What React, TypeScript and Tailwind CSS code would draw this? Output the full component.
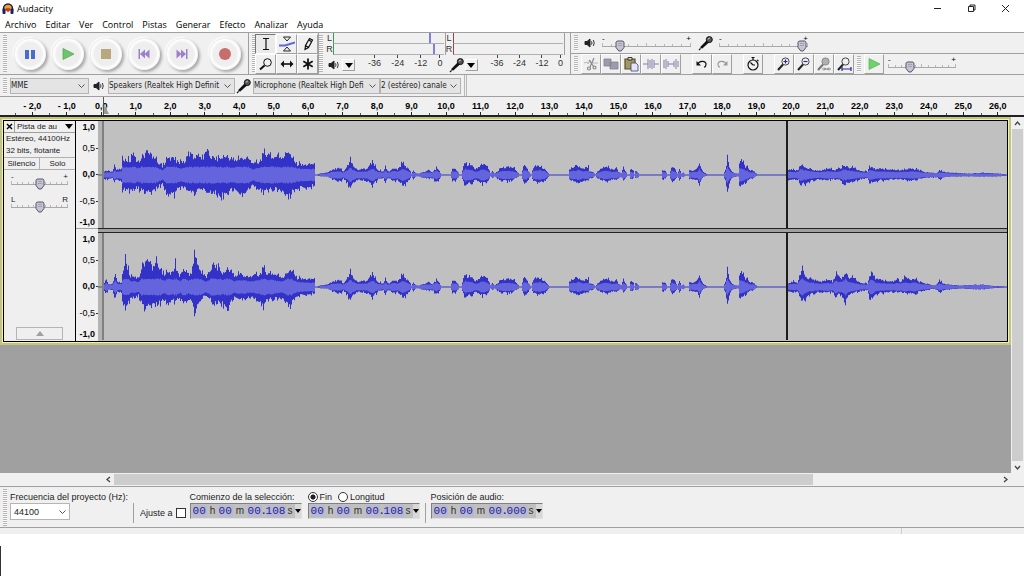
import { useState } from 'react';
import type { ReactNode } from 'react';

// [x, peak above zero, peak below zero], interpolated and roughened per column
type Peak = [number, number, number];

const VOICE: Peak[] = [
  [316, 0, 0], [320, 1, 1], [327, 2, 1], [330, 4, 3], [335, 6, 5], [340, 6, 6], [343, 3, 3], [347, 9, 8], [350, 15, 13],
  [353, 9, 8], [357, 5, 5], [362, 6, 5], [367, 6, 6], [370, 11, 9], [373, 12, 10], [375, 8, 7], [378, 4, 4], [383, 4, 3],
  [385, 9, 7], [387, 4, 3], [389, 3, 3], [392, 7, 6], [395, 7, 6], [397, 5, 5], [402, 12, 10], [406, 8, 8], [409, 5, 5],
  [411, 1, 1], [413, 4, 4], [416, 1, 1], [419, 1, 1], [421, 2, 2], [427, 4, 3], [432, 3, 3], [436, 7, 7], [439, 4, 4],
  [441, 0, 0], [450, 0, 0], [452, 6, 5], [455, 6, 5], [458, 2, 2], [459, 0, 0], [461, 0, 0], [463, 9, 7], [465, 13, 11],
  [468, 10, 9], [472, 9, 7], [475, 5, 5], [478, 7, 6], [482, 12, 9], [487, 8, 6], [489, 4, 3], [490, 1, 1], [492, 4, 3],
  [494, 1, 1], [497, 3, 3], [500, 7, 5], [508, 8, 6], [513, 7, 4], [517, 3, 2], [519, 0, 0], [521, 0, 0], [523, 9, 7],
  [525, 10, 7], [527, 6, 6], [529, 2, 2], [531, 0, 0], [532, 4, 4], [533, 8, 6], [538, 10, 7], [543, 7, 7], [547, 3, 3],
  [549, 0, 0], [568, 0, 0], [569, 6, 5], [573, 8, 6], [578, 9, 8], [583, 6, 6], [588, 8, 6], [589, 3, 3], [592, 3, 3],
  [595, 0, 0], [597, 3, 3], [600, 6, 4], [606, 9, 6], [610, 6, 5], [613, 5, 4], [616, 8, 5], [618, 3, 3], [621, 2, 2],
  [623, 8, 5], [625, 4, 3], [627, 0, 0], [629, 0, 0], [630, 5, 4], [633, 4, 3], [634, 0, 0], [635, 4, 3], [638, 2, 2],
  [639, 0, 0], [661, 0, 0], [662, 5, 4], [665, 4, 3], [667, 0, 0], [669, 0, 0], [670, 4, 3], [672, 9, 7], [675, 5, 4],
  [677, 1, 1], [679, 6, 5], [681, 1, 1], [683, 2, 2], [685, 0, 0], [688, 0, 0], [689, 5, 4], [692, 4, 4], [695, 5, 4],
  [697, 6, 5], [699, 13, 10], [700, 8, 7], [702, 4, 3], [704, 2, 1], [707, 0, 0], [723, 0, 0], [725, 5, 5], [727, 17, 17],
  [729, 8, 8], [731, 4, 3], [733, 2, 2], [736, 1, 1], [738, 1, 1], [739, 14, 12], [742, 13, 10], [745, 8, 8], [747, 10, 6],
  [749, 4, 3], [752, 5, 4], [755, 2, 1], [757, 0, 0], [787, 0, 0],
];

const LEFT: Peak[] = [
  [103, 3, 3], [106, 4, 4], [112, 3, 3], [114, 11, 6], [116, 5, 5], [121, 6, 6], [122, 18, 14], [125, 16, 15], [130, 14, 15],
  [133, 22, 16], [137, 13, 12], [142, 17, 16], [146, 24, 18], [152, 20, 19], [157, 13, 13], [162, 9, 9], [165, 13, 15],
  [168, 18, 20], [173, 17, 19], [178, 12, 14], [182, 12, 12], [185, 16, 14], [191, 25, 18], [194, 16, 20], [198, 20, 15],
  [203, 17, 15], [206, 27, 18], [210, 19, 19], [216, 17, 19], [219, 15, 22], [223, 20, 19], [230, 15, 14], [237, 16, 17],
  [243, 18, 22], [248, 17, 15], [253, 11, 10], [258, 13, 14], [263, 20, 18], [267, 23, 16], [272, 18, 14], [277, 20, 14],
  [283, 19, 17], [288, 26, 24], [292, 16, 17], [297, 11, 14], [303, 10, 13], [310, 11, 12], [314, 12, 10], [315, 0, 0],
  ...VOICE,
  [788, 6, 5], [792, 5, 4], [795, 4, 4], [798, 6, 5], [800, 11, 11], [803, 9, 9], [808, 6, 7], [813, 5, 5], [820, 4, 4],
  [827, 7, 5], [833, 5, 4], [840, 6, 5], [843, 10, 10], [847, 8, 8], [853, 7, 6], [860, 4, 4], [867, 3, 3], [869, 9, 8],
  [875, 6, 6], [880, 6, 5], [885, 6, 5], [893, 5, 4], [900, 5, 4], [912, 6, 6], [918, 5, 4], [923, 3, 3], [930, 2, 2],
  [937, 2, 2], [939, 4, 4], [943, 3, 2], [950, 2, 1], [970, 1, 1], [983, 2, 1], [1000, 1, 1], [1007, 0, 0],
];

const RIGHT: Peak[] = [
  [103, 2, 2], [106, 8, 6], [108, 2, 2], [112, 3, 3], [115, 14, 12], [117, 5, 5], [121, 4, 5], [123, 20, 18], [125, 33, 22],
  [127, 20, 18], [130, 10, 11], [135, 10, 11], [138, 9, 8], [142, 20, 18], [144, 25, 22], [149, 27, 20], [152, 20, 20],
  [157, 25, 18], [160, 17, 16], [164, 13, 12], [168, 15, 17], [173, 15, 13], [175, 24, 14], [177, 14, 13], [180, 10, 12],
  [184, 20, 17], [188, 12, 13], [191, 15, 14], [194, 35, 28], [197, 22, 20], [200, 17, 15], [203, 13, 10], [206, 10, 9],
  [210, 18, 13], [213, 24, 20], [217, 20, 15], [222, 14, 16], [227, 17, 20], [230, 16, 15], [234, 11, 11], [240, 14, 12],
  [245, 11, 14], [248, 10, 11], [255, 12, 11], [258, 12, 14], [263, 18, 21], [267, 14, 13], [272, 14, 12], [277, 12, 11],
  [283, 10, 12], [289, 18, 21], [293, 14, 13], [297, 9, 9], [303, 8, 8], [310, 8, 7], [314, 9, 6], [315, 0, 0],
  ...VOICE,
  [788, 4, 4], [793, 5, 5], [797, 4, 4], [799, 12, 9], [802, 20, 16], [805, 11, 11], [808, 8, 8], [813, 8, 6], [820, 5, 5],
  [827, 8, 5], [832, 5, 5], [836, 15, 11], [838, 9, 7], [842, 9, 10], [845, 15, 17], [848, 10, 8], [853, 9, 5], [860, 4, 4],
  [867, 3, 3], [869, 10, 12], [871, 16, 12], [875, 9, 7], [880, 7, 6], [887, 6, 5], [893, 5, 5], [897, 9, 5], [900, 5, 5],
  [905, 11, 6], [910, 6, 6], [914, 9, 8], [918, 5, 5], [927, 3, 3], [933, 1, 1], [937, 3, 3], [939, 6, 5], [943, 3, 3],
  [950, 2, 2], [960, 1, 1], [973, 2, 2], [983, 2, 2], [990, 1, 1], [1007, 0, 0],
];

const noise = (n: number) => {
  const v = Math.sin(n * 12.9898) * 43758.5453;
  return v - Math.floor(v);
};

function peakAt(peaks: Peak[], x: number): [number, number] {
  const i = peaks.findIndex((p) => p[0] > x);
  if (i < 1) return [0, 0];
  const [x0, u0, d0] = peaks[i - 1];
  const [x1, u1, d1] = peaks[i];
  const t = (x - x0) / (x1 - x0);
  return [u0 + (u1 - u0) * t, d0 + (d1 - d0) * t];
}

const rough = (n: number) => 0.78 + 0.28 * noise(n) + (noise(n + 333) > 0.86 ? 0.22 : 0);

function wavePaths(peaks: Peak[], zero: number) {
  let top = '';
  let bottom = '';
  let rmsTop = '';
  let rmsBottom = '';
  for (let x = 103; x < 1007; x++) {
    const [u, d] = peakAt(peaks, x);
    const up = u * rough(x);
    const down = d * rough(x + 5000);
    const rms = Math.min((u + d) * 0.22 + 1, 8, (u + d) / 2) * (0.92 + 0.16 * noise(x + 900));
    top += `L${x} ${(zero - up - 0.4).toFixed(1)}H${x + 1}`;
    bottom = `L${x + 1} ${(zero + down + 0.4).toFixed(1)}H${x}` + bottom;
    rmsTop += `L${x} ${(zero - rms).toFixed(1)}H${x + 1}`;
    rmsBottom = `L${x + 1} ${(zero + rms).toFixed(1)}H${x}` + rmsBottom;
  }
  return { peak: `M103 ${zero}${top}${bottom}Z`, rms: `M103 ${zero}${rmsTop}${rmsBottom}Z` };
}

function Waveform({ peaks }: { peaks: Peak[] }) {
  const { peak, rms } = wavePaths(peaks, 54);
  return (
    <svg className="block h-[107px] w-full" viewBox="98 0 909 107" preserveAspectRatio="none" aria-hidden="true">
      <rect x="98" width="909" height="107" fill="#c0c0c0" />
      <rect x="98" width="4" height="107" fill="#b4b4b4" />
      <rect x="98" y="53.5" width="5" height="1" fill="#555" />
      <path d={peak} fill="#3232c8" />
      <path d={rms} fill="#6464dc" />
      <rect x="102" width="2" height="107" fill="#808080" />
      <rect x="786" width="2" height="107" fill="#1c1c1c" />
    </svg>
  );
}

const LEVELS = [
  { text: '1,0', className: 'font-bold' },
  { text: '0,5', className: 'mt-[9px]', tick: true },
  { text: '0,0', className: 'mt-[14px] font-bold', tick: true },
  { text: '-0,5', className: 'mt-[15px]', tick: true },
  { text: '-1,0', className: 'mt-[9px] font-bold' },
];

function Channel({ peaks, tall }: { peaks: Peak[]; tall?: boolean }) {
  return (
    <div className={`flex ${tall ? 'h-[108px]' : 'h-[107px]'}`}>
      <div className="flex w-[22px] shrink-0 flex-col bg-[#f0f0f0] text-[9px] leading-[12px]">
        {LEVELS.map((l) => (
          <div key={l.text} className={`flex items-center justify-end gap-px ${l.className}`}>
            {l.text}
            <i className={`h-px w-[2px] ${l.tick ? 'bg-[#333]' : ''}`} />
          </div>
        ))}
      </div>
      <div className="min-w-0 flex-1 bg-[#c0c0c0]">
        <Waveform peaks={peaks} />
      </div>
    </div>
  );
}

function Grip({ className = 'h-[37px]' }: { className?: string }) {
  return (
    <div
      className={`mx-[3px] w-1 shrink-0 self-center bg-[repeating-linear-gradient(180deg,#b4b4b4_0_1px,#fafafa_1px_2px)] ${className}`}
    />
  );
}

function RoundButton({ label, children }: { label: string; children: ReactNode }) {
  return (
    <button
      aria-label={label}
      className="flex size-8 items-center justify-center rounded-full bg-[radial-gradient(circle,#eeeeee_50%,#ffffff_64%,#e2e2e2_72%)] shadow-[2px_2px_3px_#a8a8a8,-1px_-1px_2px_#ffffff]"
    >
      <svg width="16" height="16" viewBox="0 0 16 16">
        {children}
      </svg>
    </button>
  );
}

interface ToolButtonProps {
  label: string;
  pressed?: boolean;
  width?: string;
  children: ReactNode;
}

function ToolButton({ label, pressed, width = 'w-[20px]', children }: ToolButtonProps) {
  return (
    <button
      aria-label={label}
      aria-pressed={pressed}
      className={`flex h-[20px] shrink-0 items-center justify-center border ${width} ${
        pressed
          ? 'border-t-[#777] border-r-white border-b-white border-l-[#777] bg-[#eaeaea]'
          : 'border-t-white border-r-[#a0a0a0] border-b-[#a0a0a0] border-l-white bg-[#f0f0f0]'
      }`}
    >
      <svg width="16" height="16" viewBox="0 0 16 16" fill="none" stroke="#111" strokeWidth="1.2">
        {children}
      </svg>
    </button>
  );
}

function SpeakerIcon() {
  return (
    <svg width="12" height="12" viewBox="0 0 12 12" fill="none" stroke="#222" className="shrink-0" aria-hidden="true">
      <path d="M1 4.5h2L6 2v8L3 7.5H1z" fill="#222" />
      <path d="M7.5 4.3q1 1.7 0 3.4M9.3 3q1.9 3 0 6" strokeWidth="0.9" />
    </svg>
  );
}

function MicIcon() {
  return (
    <svg width="16" height="16" viewBox="0 0 16 16" className="shrink-0" aria-hidden="true">
      <path d="M1 15l1.6-1.6" stroke="#111" strokeWidth="1.2" />
      <path d="M2 12.2L9 5l2.3 2.3L4 13.8z" fill="#111" />
      <circle cx="11.3" cy="4.6" r="3" fill="#555" stroke="#111" />
      <path d="M9.8 4.2l2-1.2" stroke="#ddd" />
    </svg>
  );
}

function DropArrow({ label }: { label: string }) {
  return (
    <button
      aria-label={label}
      className="flex h-3 w-[13px] shrink-0 items-center justify-center border border-t-white border-r-[#a0a0a0] border-b-[#a0a0a0] border-l-white"
    >
      <svg width="8" height="5" viewBox="0 0 8 5">
        <path d="M0 0h8L4 5z" fill="#000" />
      </svg>
    </button>
  );
}

interface SliderProps {
  label: string;
  value: number;
  className: string;
  ends?: [string, string];
  ticks?: number;
}

function Slider({ label, value, className, ends = ['-', '+'], ticks = 11 }: SliderProps) {
  const [pos, setPos] = useState(value);
  return (
    <div className={`relative h-[17px] shrink-0 ${className}`}>
      <div className="flex justify-between text-[8px] leading-[8px]">
        <span>{ends[0]}</span>
        <span>{ends[1]}</span>
      </div>
      <div className="flex h-[4px] items-end justify-between border-b border-[#a8a8a8]">
        {Array.from({ length: ticks }, (_, i) => (
          <i key={i} className={`w-px bg-[#b8b8b8] ${i % 5 ? 'h-[2px]' : 'h-[3px]'}`} />
        ))}
      </div>
      <input
        type="range"
        aria-label={label}
        value={pos}
        onChange={(e) => setPos(Number(e.target.value))}
        className="absolute inset-x-0 bottom-0 m-0 h-[11px] w-full appearance-none bg-transparent [&::-webkit-slider-thumb]:size-2 [&::-webkit-slider-thumb]:appearance-none"
      />
      <svg
        className="pointer-events-none absolute bottom-0 -ml-[5px]"
        style={{ left: `${pos}%` }}
        width="10"
        height="12"
        viewBox="0 0 10 12"
      >
        <path d="M2.2 1h5.6L9 2.2v5.3L6.2 11H3.8L1 7.5V2.2z" fill="#c4c4d4" stroke="#555560" />
        <path d="M3 3.5h4M3 5.5h4" stroke="#9898a8" strokeWidth="0.8" />
      </svg>
    </div>
  );
}

interface SelectProps {
  label: string;
  value: string;
  className: string;
  id?: string;
  pad?: string;
}

function Select({ label, value, className, id, pad = 'pl-0' }: SelectProps) {
  return (
    <div className={`relative shrink-0 ${className}`}>
      <select
        id={id}
        aria-label={label}
        className={`size-full appearance-none overflow-hidden border border-[#b4b4b4] bg-inherit whitespace-nowrap ${pad}`}
      >
        <option>{value}</option>
      </select>
      <svg className="pointer-events-none absolute top-1/2 right-1 -mt-[2px]" width="7" height="5" viewBox="0 0 7 5" fill="none">
        <path d="M0.5 0.5l3 3 3-3" stroke="#555" />
      </svg>
    </div>
  );
}

function MeterBars({ color, marks, label }: { color: string; marks: string[]; label: string }) {
  return (
    <div className="flex flex-1 flex-col border-r border-[#a0a0a0]" role="img" aria-label={label}>
      {['L', 'R'].map((side, i) => (
        <div key={side} className="flex h-[11px] items-stretch">
          <span className="w-[7px] text-center text-[9px] leading-[11px] text-[#333]">{side}</span>
          <div className={`relative flex-1 border-b border-l border-b-[#b0b0b0] ${color}`}>
            {marks[i] && <i className={`absolute inset-y-0 w-[2px] bg-[#8080dc] ${marks[i]}`} />}
          </div>
          <i className="w-px" />
        </div>
      ))}
    </div>
  );
}

function MeterScale() {
  return (
    <div className="flex flex-1 justify-between pr-[2px] pl-[11px]">
      {['-36', '-24', '-12', '0'].map((db) => (
        <div key={db} className="flex flex-col items-center text-[9px] leading-[10px] text-[#333]">
          <i className="h-[3px] w-px bg-[#444]" />
          {db}
        </div>
      ))}
    </div>
  );
}

function Field({ label, value }: { label: string; value: string }) {
  return (
    <input
      aria-label={label}
      defaultValue={value}
      className={`h-[12px] border-0 bg-[#b8b8d0] p-0 font-['Liberation_Mono',monospace] text-[11px] leading-[12px] text-[#2424a0] ${
        value.length === 3 ? 'w-[20px]' : 'w-[14px]'
      }`}
    />
  );
}

function TimeBox({ label, ms }: { label: string; ms: string }) {
  return (
    <div
      role="group"
      aria-label={label}
      className="flex h-[16px] w-[112px] items-center border border-t-[#808080] border-r-[#e0e0e0] border-b-[#e0e0e0] border-l-[#808080] bg-[#c0c0c0] pl-[2px] text-[10px] leading-[12px] text-[#333]"
    >
      <Field label="horas" value="00" />
      <span className="w-[12px] text-center">h</span>
      <Field label="minutos" value="00" />
      <span className="w-[15px] text-center">m</span>
      <Field label="segundos" value="00" />
      <span className="w-[4px] text-center font-bold text-[#2424a0]">.</span>
      <Field label="milisegundos" value={ms} />
      <span className="flex-1 text-center">s</span>
      <button aria-label="Formato" className="flex h-full w-[6px] items-center justify-center bg-[#d8d8d8]">
        <svg width="6" height="4" viewBox="0 0 6 4">
          <path d="M0 0h6L3 4z" fill="#000" />
        </svg>
      </button>
    </div>
  );
}

function Magnifier({ fill = 'none', children }: { fill?: string; children?: ReactNode }) {
  return (
    <>
      <path d="M7 8.5L2 14" stroke="#222" strokeWidth="2" />
      <circle cx="9.5" cy="5.5" r="3.6" stroke="#444" strokeWidth="1" fill={fill} />
      {children}
    </>
  );
}

const MENUS = ['Archivo', 'Editar', 'Ver', 'Control', 'Pistas', 'Generar', 'Efecto', 'Analizar', 'Ayuda'];

function TitleBar() {
  return (
    <header className="bg-white font-['Open_Sans','Noto_Sans',sans-serif] text-[9px]">
      <div className="flex h-[17px] items-center pl-[2px]">
        <svg width="12" height="12" viewBox="0 0 12 12" className="shrink-0">
          <path d="M1.5 8V5.5a4.5 4.5 0 0 1 9 0V8" fill="#e8a030" stroke="#1c2050" strokeWidth="1.5" />
          <rect x="0.5" y="5.5" width="3" height="5.5" rx="1" fill="#182068" />
          <rect x="8.5" y="5.5" width="3" height="5.5" rx="1" fill="#182068" />
          <path d="M4 8l1-3 1 4 1-4 1 3" stroke="#d03010" fill="none" />
        </svg>
        <h1 className="ml-[3px] flex-1">Audacity</h1>
        <div className="flex gap-[25px] pr-[14px]">
          <button aria-label="Minimizar">
            <svg width="9" height="9" viewBox="0 0 9 9" fill="none" stroke="#222">
              <path d="M1 4.5h7" />
            </svg>
          </button>
          <button aria-label="Restaurar">
            <svg width="9" height="9" viewBox="0 0 9 9" fill="none" stroke="#222">
              <path d="M1.5 2.5h5v5h-5zM3 2.5V1h5v5H6.5" />
            </svg>
          </button>
          <button aria-label="Cerrar">
            <svg width="9" height="9" viewBox="0 0 9 9" fill="none" stroke="#222">
              <path d="M1 1l7 7M8 1L1 8" />
            </svg>
          </button>
        </div>
      </div>
      <nav className="flex h-[15px] items-center gap-[9px] pl-[5px]">
        {MENUS.map((m) => (
          <button key={m}>{m}</button>
        ))}
      </nav>
    </header>
  );
}

function TransportBar() {
  return (
    <div className="flex shrink-0 items-center border-r border-[#a0a0a0]">
      <Grip />
      <div className="flex gap-[6px] pr-[7px] pl-1">
        <RoundButton label="Pausa">
          <path d="M3 4h4v9H3zM9 4h4v9H9z" fill="#4a6ad0" />
        </RoundButton>
        <RoundButton label="Reproducir">
          <path d="M3 2.500v11L14 8z" fill="#6cc46c" stroke="#58a858" strokeWidth="0.8" />
        </RoundButton>
        <RoundButton label="Detener">
          <path d="M3 3h10v10H3z" fill="#b8a880" />
        </RoundButton>
        <RoundButton label="Ir al inicio">
          <path d="M2.5 3H4v10H2.500zM4 8l5-4.500v9zM8.500 8l5-4.500v9z" fill="#9c80cc" />
        </RoundButton>
        <RoundButton label="Ir al final">
          <path d="M13.500 3H12v10h1.500zM12 8L7 3.500v9zM7.500 8l-5-4.500v9z" fill="#9c80cc" />
        </RoundButton>
        <div className="ml-[5px]">
          <RoundButton label="Grabar">
            <circle cx="8" cy="8" r="6" fill="#c86c6c" />
          </RoundButton>
        </div>
      </div>
    </div>
  );
}

function ToolsBar() {
  return (
    <div className="flex shrink-0 items-center border-r border-[#a0a0a0]">
      <Grip className="-mr-px h-[37px]" />
      <div className="grid grid-cols-3">
        <ToolButton label="Selección" width="w-[21px]" pressed>
          <path d="M5 2.500h6M8 2.500v11M5 13.500h6" />
        </ToolButton>
        <ToolButton label="Envolvente" width="w-[21px]">
          <path d="M4.500 1h7L8 5zM8 11l3.500 4h-7z" strokeWidth="0.9" />
          <path d="M0 9.500h6l10-3" stroke="#6464dc" strokeWidth="2" />
        </ToolButton>
        <ToolButton label="Dibujo" width="w-[21px]">
          <path d="M5 13.500l0.500-4 4-7 3 1.500-4 7.500zM5.500 9.500l3 2M9 4l3 2" />
        </ToolButton>
        <ToolButton label="Zoom" width="w-[21px]">
          <path d="M6.500 9.500L2 13.500" strokeWidth="2" />
          <circle cx="9.500" cy="6.500" r="3.800" strokeWidth="1" />
        </ToolButton>
        <ToolButton label="Desplazamiento en el tiempo" width="w-[21px]">
          <path d="M3 8h10" strokeWidth="1.600" />
          <path d="M5 4.500L1.500 8 5 11.500zM11 4.500L14.500 8 11 11.500z" fill="#111" stroke="none" />
        </ToolButton>
        <ToolButton label="Multiherramienta" width="w-[21px]">
          <path d="M8 2.500v11M3.300 5.300l9.400 5.400M12.700 5.300l-9.400 5.400" strokeWidth="1.800" />
        </ToolButton>
      </div>
    </div>
  );
}

function MeterBar() {
  return (
    <div className="flex w-[252px] shrink-0 border-r border-[#a0a0a0]">
      <Grip className="-ml-0 h-[37px]" />
      <div className="flex flex-1 flex-col">
        <div className="flex">
          <MeterBars label="Nivel de reproducción" color="border-l-[#409850]" marks={['left-[95px]', 'left-[99px]']} />
          <MeterBars label="Nivel de grabación" color="border-l-[#a04040]" marks={[]} />
          <i className="w-[5px]" />
        </div>
        <div className="flex pr-[5px]">
          <div className="flex flex-1 items-start gap-[2px] pl-[2px]">
            <div className="flex items-center gap-[2px] pt-[4px]">
              <SpeakerIcon />
              <DropArrow label="Opciones de reproducción" />
            </div>
            <MeterScale />
          </div>
          <div className="flex flex-1 items-start gap-[2px] pl-[4px]">
            <div className="flex items-center pt-[2px]">
              <MicIcon />
              <DropArrow label="Opciones de grabación" />
            </div>
            <MeterScale />
          </div>
        </div>
      </div>
    </div>
  );
}

function MixerAndEditBars() {
  return (
    <div className="flex min-w-0 flex-1 flex-col">
      <div className="flex h-[21px] items-center border-b border-[#a0a0a0]">
        <Grip className="h-[16px]" />
        <div className="w-[3px]" />
        <SpeakerIcon />
        <Slider label="Volumen de reproducción" value={20} className="ml-[6px] w-[89px]" />
        <div className="ml-[7px] flex">
          <MicIcon />
        </div>
        <Slider label="Volumen de grabación" value={93} className="ml-[5px] w-[89px]" />
      </div>
      <div className="flex h-[20px] items-center">
        <Grip className="h-[16px]" />
        <ToolButton label="Cortar">
          <path d="M1 7l3-1 1 2 2-4 1 3h7" stroke="#aaa" strokeWidth="0.8" />
          <path d="M11 2L7 11M6 4l5 7" stroke="#888" />
          <circle cx="6" cy="12.500" r="1.500" stroke="#888" />
          <circle cx="11.500" cy="11.500" r="1.500" stroke="#888" />
        </ToolButton>
        <ToolButton label="Copiar">
          <path d="M1 3h7v7H1zM7 6h8v7H7z" fill="#9c9cac" stroke="#808090" strokeWidth="0.8" />
        </ToolButton>
        <ToolButton label="Pegar">
          <path d="M2 3h10v10H2z" fill="#a09860" stroke="#55502c" />
          <path d="M5 1.500h4v2.500H5z" fill="#ddd" strokeWidth="0.8" />
          <path d="M8 7h5l2 2v6H8z" fill="#e4e4f4" stroke="#404078" strokeWidth="0.8" />
        </ToolButton>
        <ToolButton label="Recortar">
          <path d="M0 8h5M11 8h5M5 3v10M7 4v8M9 3v10M11 4v8" stroke="#8080a8" strokeWidth="1" />
        </ToolButton>
        <ToolButton label="Silenciar">
          <path d="M1 4v8M3 3v10M5 5v6M5 8h6M11 5v6M13 3v10M15 5v6" stroke="#8080a8" strokeWidth="1" />
        </ToolButton>
        <div className="ml-[11px] flex">
          <ToolButton label="Deshacer">
            <path d="M3.500 8.500c2-5 9-3.500 8.500 0 0 1.500-1 2.500-2 2.800" />
            <path d="M2.500 5v4.500H7z" fill="#111" stroke="none" />
          </ToolButton>
          <ToolButton label="Rehacer">
            <path d="M12.500 8.500c-2-5-9-3.500-8.500 0 0 1.500 1 2.500 2 2.800" stroke="#999" />
            <path d="M13.500 5v4.500H9z" fill="#999" stroke="none" />
          </ToolButton>
        </div>
        <div className="ml-[11px] flex">
          <ToolButton label="Temporizador">
            <circle cx="8" cy="9" r="5" />
            <path d="M6.500 1.500h3M8 1.500V4M8 9L5.500 6.500M8 9h2M12 4l1.500 1" />
          </ToolButton>
        </div>
        <div className="ml-[11px] flex">
          <ToolButton label="Acercar">
            <Magnifier>
              <path d="M7.500 5.500h4M9.500 3.500v4" stroke="#2828a0" />
            </Magnifier>
          </ToolButton>
          <ToolButton label="Alejar">
            <Magnifier>
              <path d="M7.500 5.500h4" stroke="#2828a0" />
            </Magnifier>
          </ToolButton>
          <ToolButton label="Ajustar selección">
            <g opacity="0.6">
              <Magnifier fill="#888">
                <path d="M6 13h9M8 11.500L9.500 13 8 14.500M13 11.500L11.500 13l1.500 1.500" strokeWidth="0.8" />
              </Magnifier>
            </g>
          </ToolButton>
          <ToolButton label="Ajustar proyecto">
            <Magnifier>
              <path d="M6 13h9M6 11v4M15 11v4" stroke="#2828a0" />
            </Magnifier>
          </ToolButton>
        </div>
        <Grip className="h-[16px]" />
        <ToolButton label="Reproducir a velocidad">
          <path d="M3 2.500v11L14 8z" fill="#6cd06c" stroke="#60b860" strokeWidth="0.8" />
        </ToolButton>
        <Slider label="Velocidad de reproducción" value={33} className="ml-[4px] w-[68px]" />
      </div>
    </div>
  );
}

function DeviceBar() {
  return (
    <div className="flex h-[21px] items-center font-['DejaVu_Sans_Condensed','DejaVu_Sans',sans-serif] text-[8px] text-[#222]">
      <Grip className="h-[16px]" />
      <Select label="Sistema de audio" value="MME" className="h-4 w-[79px] bg-[#e4e4e4]" />
      <div className="mr-[3px] ml-1">
        <SpeakerIcon />
      </div>
      <Select label="Dispositivo de salida" value="Speakers (Realtek High Definit" className="h-4 w-[127px] bg-[#e4e4e4]" />
      <div className="mx-[1px]">
        <MicIcon />
      </div>
      <Select label="Dispositivo de entrada" value="Microphone (Realtek High Defi" className="h-4 w-[127px] bg-[#e4e4e4]" />
      <Select label="Canales de entrada" value="2 (estéreo) canale" className="h-4 w-[81px] bg-[#e4e4e4]" />
      <div className="ml-[3px] h-full w-[3px] border-x border-[#b8b8b8]" />
    </div>
  );
}

function TimeRuler() {
  const seconds = Array.from({ length: 29 }, (_, i) => i - 2);
  return (
    <div className="relative h-[21px] border-t border-b-2 border-t-[#a0a0a0] border-b-[#222] bg-[#f0f0f0] pr-[9px] pl-[15px]">
      <div className="flex h-full">
        {seconds.map((s) => (
          <div key={s} className="flex flex-1 flex-col items-center justify-end bg-[linear-gradient(#555,#555)] bg-[length:1px_2px] bg-left-bottom bg-no-repeat">
            <b className="text-[9px] leading-[11px] whitespace-nowrap">
              {s < 0 ? `- ${-s},0` : `${s},0`}
            </b>
            <i className="h-[3px] w-px bg-[#222]" />
          </div>
        ))}
      </div>
      <svg className="absolute top-0 left-[101px]" width="8" height="18" viewBox="0 0 8 18" aria-hidden="true">
        <path d="M3 10h3v3l2 4H3z" fill="#999" />
        <path d="M2.500 0v18" stroke="#555" />
      </svg>
    </div>
  );
}

function TrackPanel() {
  return (
    <div className="flex w-[72px] shrink-0 flex-col border-r border-black bg-[#efefef] text-[8px] leading-[12px] text-[#222]">
      <div className="flex h-[12px] border-b border-[#a0a0a0]">
        <button aria-label="Cerrar pista" className="flex w-[11px] items-center justify-center border-r border-[#a0a0a0]">
          <svg width="7" height="7" viewBox="0 0 7 7">
            <path d="M1 1l5 5M6 1L1 6" stroke="#000" strokeWidth="1.400" />
          </svg>
        </button>
        <button className="flex flex-1 items-center justify-between pr-[2px] pl-[2px] leading-[11px]">
          Pista de au
          <svg width="8" height="5" viewBox="0 0 8 5">
            <path d="M0 0h8L4 5z" fill="#000" />
          </svg>
        </button>
      </div>
      <p className="pl-[2px] whitespace-nowrap">Estéreo, 44100Hz</p>
      <p className="pl-[2px] whitespace-nowrap">32 bits, flotante</p>
      <div className="flex h-[13px] border-y border-[#b0b0b0] leading-[11px]">
        <button className="flex-1 border-r border-[#b0b0b0]">Silencio</button>
        <button className="flex-1">Solo</button>
      </div>
      <Slider label="Ganancia" value={50} className="mx-auto mt-[3px] w-[57px]" />
      <Slider label="Balance" value={50} className="mx-auto mt-[6px] w-[57px]" ends={['L', 'R']} />
      <button
        aria-label="Contraer pista"
        className="mx-auto mt-auto mb-px flex h-[13px] w-[47px] items-center justify-center border border-[#b4b4b4]"
      >
        <svg width="8" height="5" viewBox="0 0 8 5">
          <path d="M0 5h8L4 0z" fill="#a0a0a0" />
        </svg>
      </button>
    </div>
  );
}

function ScrollArrow({ label, path }: { label: string; path: string }) {
  return (
    <button aria-label={label} className="flex size-[12px] shrink-0 items-center justify-center">
      <svg width="7" height="7" viewBox="0 0 7 7" fill="none" stroke="#444" strokeWidth="1.300">
        <path d={path} />
      </svg>
    </button>
  );
}

function Workspace() {
  return (
    <main className="flex flex-1 bg-[#a0a0a0]">
      <div className="min-w-0 flex-1">
        <div className="border-2 border-[#c2c28c] bg-[#f4f4a0] p-px">
          <div className="flex border border-black">
            <TrackPanel />
            <div className="min-w-0 flex-1">
              <Channel peaks={LEFT} />
              <div className="flex h-[5px]">
                <div className="w-[22px] border-t border-[#a0a0a0] bg-[#f0f0f0]" />
                <div className="flex-1 border-y border-[#222] bg-[#a0a0a0]" />
              </div>
              <Channel peaks={RIGHT} tall />
            </div>
          </div>
        </div>
      </div>
      <div className="flex w-[13px] flex-col items-center bg-[#f0f0f0]">
        <ScrollArrow label="Subir" path="M1 5l2.500-3L6 5" />
        <div className="w-[11px] flex-1 bg-[#cdcdcd]" />
        <ScrollArrow label="Bajar" path="M1 2l2.500 3L6 2" />
      </div>
    </main>
  );
}

function SelectionBar() {
  const [mode, setMode] = useState('fin');
  const radio =
    'm-0 size-[10px] appearance-none rounded-full border border-[#333] bg-white checked:bg-[radial-gradient(circle,#222_40%,#fff_50%)]';
  return (
    <footer className="flex h-[42px] items-stretch border-t border-b border-[#a0a0a0] bg-[#f0f0f0] text-[9px] leading-[12px] text-[#222]">
      <Grip />
      <div className="flex w-[123px] shrink-0 flex-col pt-[4px]">
        <label htmlFor="rate" className="whitespace-nowrap">
          Frecuencia del proyecto (Hz):
        </label>
        <Select
          id="rate"
          label="Frecuencia del proyecto (Hz)"
          value="44100"
          className="h-[17px] w-[60px] bg-white"
          pad="pl-[3px]"
        />
      </div>
      <div className="mt-[16px] mr-[6px] h-[20px] w-px bg-[#a0a0a0]" />
      <label className="mt-[17px] flex h-[18px] shrink-0 items-center gap-[3px] self-start whitespace-nowrap">
        Ajuste a
        <input type="checkbox" className="m-0 size-[10px] appearance-none border border-[#333] bg-white" />
      </label>
      <div className="ml-1 flex flex-col pt-[4px]">
        <span>Comienzo de la selección:</span>
        <TimeBox label="Comienzo de la selección" ms="108" />
      </div>
      <fieldset className="ml-[6px] flex flex-col pt-[4px]">
        <div className="flex items-center gap-[6px]">
          <label className="flex items-center gap-[2px]">
            <input type="radio" name="mode" checked={mode === 'fin'} onChange={() => setMode('fin')} className={radio} />
            Fin
          </label>
          <label className="flex items-center gap-[2px]">
            <input type="radio" name="mode" checked={mode === 'long'} onChange={() => setMode('long')} className={radio} />
            Longitud
          </label>
        </div>
        <TimeBox label="Fin de la selección" ms="108" />
      </fieldset>
      <div className="mx-[5px] mt-[16px] h-[20px] w-px bg-[#a0a0a0]" />
      <div className="flex flex-col pt-[4px]">
        <span>Posición de audio:</span>
        <TimeBox label="Posición de audio" ms="000" />
      </div>
    </footer>
  );
}

export default function App() {
  return (
    <div className="flex min-h-screen flex-col overflow-hidden bg-white font-['Liberation_Sans',Arial,sans-serif] text-black">
      <TitleBar />
      <div className="bg-[#f0f0f0]">
        <div className="flex h-[43px] border-y border-[#a0a0a0]">
          <TransportBar />
          <ToolsBar />
          <MeterBar />
          <MixerAndEditBars />
        </div>
        <DeviceBar />
      </div>
      <TimeRuler />
      <Workspace />
      <div className="flex h-[13px] items-center bg-[#f0f0f0] pr-px pl-[102px]">
        <ScrollArrow label="Izquierda" path="M5 1L2 3.500 5 6" />
        <div className="flex h-[11px] flex-1">
          <div className="w-[79%] bg-[#cdcdcd]" />
        </div>
        <ScrollArrow label="Derecha" path="M2 1l3 2.500L2 6" />
        <div className="w-[12px]" />
      </div>
      <SelectionBar />
      <div className="flex h-[6px] bg-[#f0f0f0] pl-[88%]">
        <i className="w-px bg-[#ccc]" />
      </div>
      <div className="h-[42px] pt-[12px]">
        <div className="h-full w-px bg-[#333]" />
      </div>
    </div>
  );
}
